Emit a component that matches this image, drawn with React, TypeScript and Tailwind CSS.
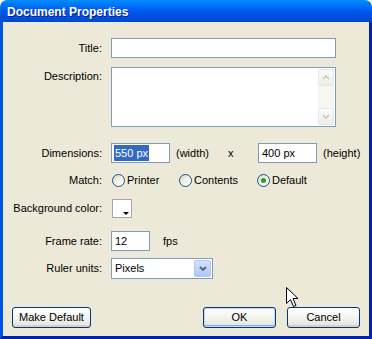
import React from "react";

const Field = ({ w, value, selected }: { w: string; value: string; selected?: boolean }) => (
  <div className={`flex h-[20px] ${w} items-center border border-[#7F9DB9] bg-white pl-[2px]`}>
    {selected ? (
      <span className="bg-[#316AC5] px-px text-white">{value}</span>
    ) : (
      <span className="pl-px">{value}</span>
    )}
  </div>
);

const Radio = ({ label, checked, w }: { label: string; checked?: boolean; w?: string }) => (
  <div className={`flex items-center gap-[2px] ${w ?? ""}`}>
    <span className="flex h-[13px] w-[13px] items-center justify-center rounded-full border border-[#1C5180] bg-gradient-to-br from-[#D6D5CC] via-[#F2F2EE] to-white">
      {checked && <span className="h-[5px] w-[5px] rounded-full bg-[#21A121]" />}
    </span>
    <span>{label}</span>
  </div>
);

const Button = ({ label, w, primary }: { label: string; w: string; primary?: boolean }) => (
  <div
    className={`flex h-[21px] ${w} items-center justify-center rounded-[3px] border border-[#003C74] bg-gradient-to-b from-white via-[#F4F4F0] to-[#E3E2DA] ${
      primary ? "shadow-[inset_0_0_0_1px_#C5D7F6,inset_0_-1px_0_1px_#8AAAE4]" : "shadow-[inset_0_-2px_0_#D6D0C5]"
    }`}
  >
    {label}
  </div>
);

const Row = ({ label, top, children, alignTop }: { label: string; top: string; children?: React.ReactNode; alignTop?: boolean }) => (
  <div className={`flex ${alignTop ? "items-start" : "items-center"} ${top}`}>
    <div className={`w-[99px] text-right ${alignTop ? "pt-px" : ""}`}>{label}</div>
    <div className="ml-[9px] flex items-center">{children}</div>
  </div>
);

const ScrollBtn = ({ up }: { up?: boolean }) => (
  <div className="flex h-[17px] w-[16px] items-center justify-center rounded-[2px] border border-[#E3E7F2] bg-gradient-to-b from-[#FBFBFA] to-[#EEEDE5]">
    <svg width="8" height="5" viewBox="0 0 8 5">
      <path d={up ? "M1 4 L4 1 L7 4" : "M1 1 L4 4 L7 1"} fill="none" stroke="#C9C7BA" strokeWidth="1.6" />
    </svg>
  </div>
);

export default function App() {
  return (
    <div className="relative flex h-[339px] w-[372px] flex-col bg-white font-['Liberation_Sans',Arial,sans-serif] text-[11px] text-black">
      {/* title bar */}
      <div className="flex h-[22px] items-center rounded-t-[7px] bg-gradient-to-b from-[#0A8CFF] via-[#0058EE] to-[#0047D4] pl-[7px] pt-px">
        <span className="text-[12px] font-bold text-white [text-shadow:1px_1px_#0A1F80]">Document Properties</span>
      </div>
      <div className="flex flex-1 flex-col border-x-[3px] border-b-[3px] border-l-[#0054E3] border-r-[#0022A8] border-b-[#0022A8] bg-[#ECE9D8]">
        <Row label="Title:" top="mt-[16px]">
          <Field w="w-[225px]" value="" />
        </Row>
        <Row label="Description:" top="mt-[9px]" alignTop>
          <div className="flex h-[60px] w-[225px] justify-end border border-[#7F9DB9] bg-white p-px">
            <div className="flex w-[16px] flex-col justify-between bg-[#F7F7F2]">
              <ScrollBtn up />
              <ScrollBtn />
            </div>
          </div>
        </Row>
        <Row label="Dimensions:" top="mt-[16px]">
          <Field w="w-[59px]" value="550 px" selected />
          <span className="ml-[6px] w-[52px]">(width)</span>
          <span className="w-[30px]">x</span>
          <Field w="w-[59px]" value="400 px" />
          <span className="ml-[6px]">(height)</span>
        </Row>
        <Row label="Match:" top="mt-[7px] h-[20px]">
          <div className="ml-px flex items-center">
            <Radio label="Printer" w="w-[67px]" />
            <Radio label="Contents" w="w-[78px]" />
            <Radio label="Default" checked />
          </div>
        </Row>
        <Row label="Background color:" top="mt-[8px] h-[20px]">
          <div className="relative ml-px h-[19px] w-[20px] border border-[#A7A6AA] bg-white">
            <span className="absolute bottom-[2px] right-[2px] h-0 w-0 border-x-[3px] border-t-[3px] border-x-transparent border-t-black" />
          </div>
        </Row>
        <Row label="Frame rate:" top="mt-[13px]">
          <Field w="w-[39px]" value="12" />
          <span className="ml-[13px]">fps</span>
        </Row>
        <Row label="Ruler units:" top="mt-[7px]">
          <div className="flex h-[21px] w-[102px] items-center justify-between border border-[#7F9DB9] bg-white p-px pl-[3px]">
            <span>Pixels</span>
            <div className="flex h-[17px] w-[17px] items-center justify-center rounded-[2px] border border-[#B3C6F0] bg-gradient-to-b from-[#D4E1FD] to-[#B0C6F6]">
              <svg width="8" height="5" viewBox="0 0 8 5">
                <path d="M1 1 L4 4 L7 1" fill="none" stroke="#4D6185" strokeWidth="1.8" />
              </svg>
            </div>
          </div>
        </Row>
        <div className="mt-[28px] flex items-center px-[9px]">
          <Button label="Make Default" w="w-[79px]" />
          <div className="ml-auto flex gap-[11px]">
            <Button label="OK" w="w-[73px]" primary />
            <Button label="Cancel" w="w-[73px]" />
          </div>
        </div>
      </div>
      {/* mouse cursor */}
      <svg className="absolute left-[286px] top-[287px]" width="13" height="21" viewBox="0 0 13 21">
        <path d="M0.5 0.5 L0.5 16.5 L4.5 12.5 L7.5 19.5 L10 18.5 L7 11.5 L12 11.5 Z" fill="white" stroke="black" strokeWidth="1" />
      </svg>
    </div>
  );
}
